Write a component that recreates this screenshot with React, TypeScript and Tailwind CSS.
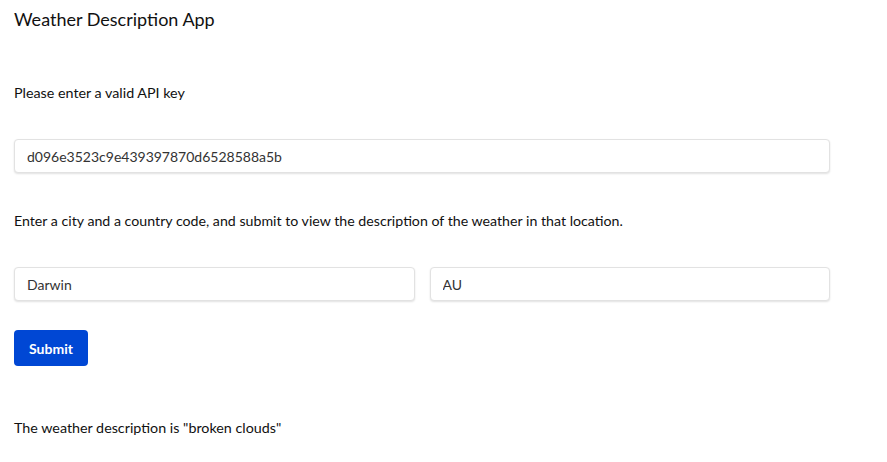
import React, { useState } from "react"

function App() {
  const [apiKey, setApiKey] = useState("d096e3523c9e439397870d6528588a5b")
  const [city, setCity] = useState("Darwin")
  const [country, setCountry] = useState("AU")

  const inputClass =
    "h-[34px] w-full rounded-[4px] border border-[#e2e2e2] bg-white px-[12px] text-[14px] text-[#333] shadow-[0_1px_2px_rgba(0,0,0,0.12)] outline-none"

  return (
    <div className="min-h-screen bg-white pl-[14px] pt-[7px] text-[#111] font-['Lato','Liberation_Sans',sans-serif]">
      <h1 className="text-[18px] leading-[24px] font-normal">Weather Description App</h1>

      <p className="mt-[52px] text-[14.3px] leading-[20px]">Please enter a valid API key</p>

      <div className="mt-[36px] w-[816px]">
        <input className={inputClass} value={apiKey} onChange={(e) => setApiKey(e.target.value)} />
      </div>

      <p className="mt-[38px] text-[14.2px] leading-[20px]">
        Enter a city and a country code, and submit to view the description of the weather in that location.
      </p>

      <div className="mt-[36px] flex w-[816px] gap-[15px]">
        <input className={inputClass} value={city} onChange={(e) => setCity(e.target.value)} />
        <input className={inputClass} value={country} onChange={(e) => setCountry(e.target.value)} />
      </div>

      <button className="mt-[29px] h-[36px] w-[74px] rounded-[4px] bg-[#0047d4] text-[14px] font-bold text-white">
        Submit
      </button>

      <p className="mt-[52px] text-[14.3px] leading-[20px]">The weather description is "broken clouds"</p>
    </div>
  )
}

export default App
